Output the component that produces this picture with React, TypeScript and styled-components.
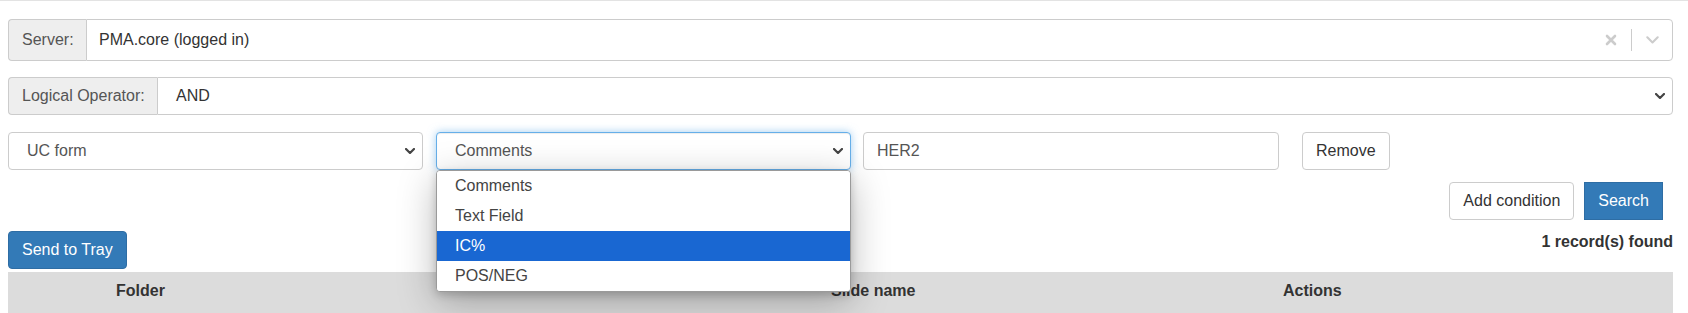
import styled, { createGlobalStyle, css } from 'styled-components';

const GlobalStyle = createGlobalStyle`
  body {
    margin: 0;
    font-family: "Liberation Sans", Arial, sans-serif;
    font-size: 16px;
    color: #333;
    background: #fff;
  }
  * { box-sizing: border-box; }
`;

const TopRule = styled.div`
  height: 1px;
  background: #e3e3e3;
`;

const Page = styled.div`
  padding: 0 15px 0 8px;
`;

const InputGroup = styled.div<{ $height: number; $top: number }>`
  display: flex;
  height: ${(p) => p.$height}px;
  margin-top: ${(p) => p.$top}px;
`;

const Addon = styled.div<{ $width: number }>`
  flex: 0 0 ${(p) => p.$width}px;
  display: flex;
  align-items: center;
  padding-left: 13px;
  background: #eee;
  border: 1px solid #ccc;
  border-right: none;
  border-radius: 4px 0 0 4px;
  color: #555;
`;

const ReactSelectBox = styled.div`
  flex: 1;
  display: flex;
  align-items: center;
  border: 1px solid #ccc;
  border-radius: 0 4px 4px 0;
  padding-left: 12px;
  color: #333;
`;

const Value = styled.div`
  flex: 1;
`;

const Indicators = styled.div`
  display: flex;
  align-items: center;
  height: 100%;
`;

const IndicatorIcon = styled.div`
  width: 40px;
  display: flex;
  justify-content: center;
  align-items: center;
  color: #ccc;
`;

const Separator = styled.span`
  width: 1px;
  height: 22px;
  background: #ccc;
`;

const selectBase = css`
  position: relative;
  display: flex;
  align-items: center;
  height: 38px;
  padding: 0 7px 0 18px;
  border: 1px solid #ccc;
  background: #fff;
  color: #555;
`;

const NativeSelect = styled.div<{ $width?: number; $focused?: boolean; $square?: boolean }>`
  ${selectBase}
  flex: ${(p) => (p.$width ? `0 0 ${p.$width}px` : '1')};
  border-radius: ${(p) => (p.$square ? '0 4px 4px 0' : '4px')};
  ${(p) =>
    p.$focused &&
    css`
      border-color: #66afe9;
      box-shadow: inset 0 1px 1px rgba(0, 0, 0, 0.075), 0 0 8px rgba(102, 175, 233, 0.6);
    `}
`;

const SelectText = styled.span<{ $dark?: boolean }>`
  flex: 1;
  color: ${(p) => (p.$dark ? '#333' : '#555')};
`;

const TextInput = styled.div<{ $width: number }>`
  flex: 0 0 ${(p) => p.$width}px;
  display: flex;
  align-items: center;
  height: 38px;
  padding: 0 13px;
  border: 1px solid #ccc;
  border-radius: 4px;
  color: #555;
`;

const ConditionRow = styled.div`
  display: flex;
  align-items: center;
  margin-top: 17px;
`;

const Gap = styled.div<{ $w: number }>`
  flex: 0 0 ${(p) => p.$w}px;
`;

const Button = styled.button<{ $primary?: boolean; $square?: boolean }>`
  height: 38px;
  padding: 0 13px;
  font-family: inherit;
  font-size: 16px;
  line-height: 24px;
  border-radius: ${(p) => (p.$square ? '0' : '4px')};
  border: 1px solid ${(p) => (p.$primary ? '#2e6da4' : '#ccc')};
  background: ${(p) => (p.$primary ? '#337ab7' : '#fff')};
  color: ${(p) => (p.$primary ? '#fff' : '#333')};
  white-space: nowrap;
`;

const ActionsRow = styled.div`
  display: flex;
  justify-content: flex-end;
  gap: 10px;
  margin-top: 12px;
  padding-right: 10px;
`;

const ResultsRow = styled.div`
  display: flex;
  justify-content: space-between;
  align-items: center;
  margin-top: 11px;
`;

const RecordCount = styled.div`
  font-weight: bold;
  color: #333;
  margin-top: -17px;
`;

const TableHeader = styled.div`
  display: grid;
  grid-template-columns: 108px 715px 452px 1fr;
  margin-top: 3px;
  background: #dcdcdc;
  padding: 8px 0 14px;
  font-weight: bold;
  color: #333;
  line-height: 22px;
`;

const Dropdown = styled.ul`
  position: absolute;
  top: calc(100% + 1px);
  left: -1px;
  right: -1px;
  margin: 0;
  padding: 0;
  list-style: none;
  background: #fff;
  border: 1px solid #9a9a9a;
  border-radius: 4px;
  overflow: hidden;
  box-shadow: 0 10px 38px rgba(0, 0, 0, 0.28), 0 3px 8px rgba(0, 0, 0, 0.18);
  z-index: 10;
`;

const Option = styled.li<{ $active?: boolean }>`
  height: 30px;
  display: flex;
  align-items: center;
  padding-left: 18px;
  background: ${(p) => (p.$active ? '#1967d2' : '#fff')};
  color: ${(p) => (p.$active ? '#fff' : '#444')};
`;

const Chevron = ({ color = '#444', w = 10, sw = 2.2 }: { color?: string; w?: number; sw?: number }) => (
  <svg width={w} height={w * 0.6} viewBox="0 0 10 6" fill="none">
    <polyline points="1,1 5,5 9,1" stroke={color} strokeWidth={sw} strokeLinecap="round" strokeLinejoin="round" />
  </svg>
);

const Cross = () => (
  <svg width="12" height="12" viewBox="0 0 12 12">
    <path d="M2 2 L10 10 M10 2 L2 10" stroke="#ccc" strokeWidth="2.6" strokeLinecap="round" />
  </svg>
);

export default function App() {
  return (
    <>
      <GlobalStyle />
      <TopRule />
      <Page>
        <InputGroup $height={42} $top={18}>
          <Addon $width={78}>Server:</Addon>
          <ReactSelectBox>
            <Value>PMA.core (logged in)</Value>
            <Indicators>
              <IndicatorIcon>
                <Cross />
              </IndicatorIcon>
              <Separator />
              <IndicatorIcon>
                <Chevron color="#ccc" w={13} sw={1.6} />
              </IndicatorIcon>
            </Indicators>
          </ReactSelectBox>
        </InputGroup>

        <InputGroup $height={38} $top={16}>
          <Addon $width={149}>Logical Operator:</Addon>
          <NativeSelect $square>
            <SelectText $dark>AND</SelectText>
            <Chevron />
          </NativeSelect>
        </InputGroup>

        <ConditionRow>
          <NativeSelect $width={415}>
            <SelectText>UC form</SelectText>
            <Chevron />
          </NativeSelect>
          <Gap $w={13} />
          <NativeSelect $width={415} $focused>
            <SelectText>Comments</SelectText>
            <Chevron />
            <Dropdown>
              <Option>Comments</Option>
              <Option>Text Field</Option>
              <Option $active>IC%</Option>
              <Option>POS/NEG</Option>
            </Dropdown>
          </NativeSelect>
          <Gap $w={12} />
          <TextInput $width={416}>HER2</TextInput>
          <Gap $w={23} />
          <Button>Remove</Button>
        </ConditionRow>

        <ActionsRow>
          <Button>Add condition</Button>
          <Button $primary $square>
            Search
          </Button>
        </ActionsRow>

        <ResultsRow>
          <Button $primary>Send to Tray</Button>
          <RecordCount>1 record(s) found</RecordCount>
        </ResultsRow>

        <TableHeader>
          <span />
          <span>Folder</span>
          <span>Slide name</span>
          <span>Actions</span>
        </TableHeader>
      </Page>
    </>
  );
}
